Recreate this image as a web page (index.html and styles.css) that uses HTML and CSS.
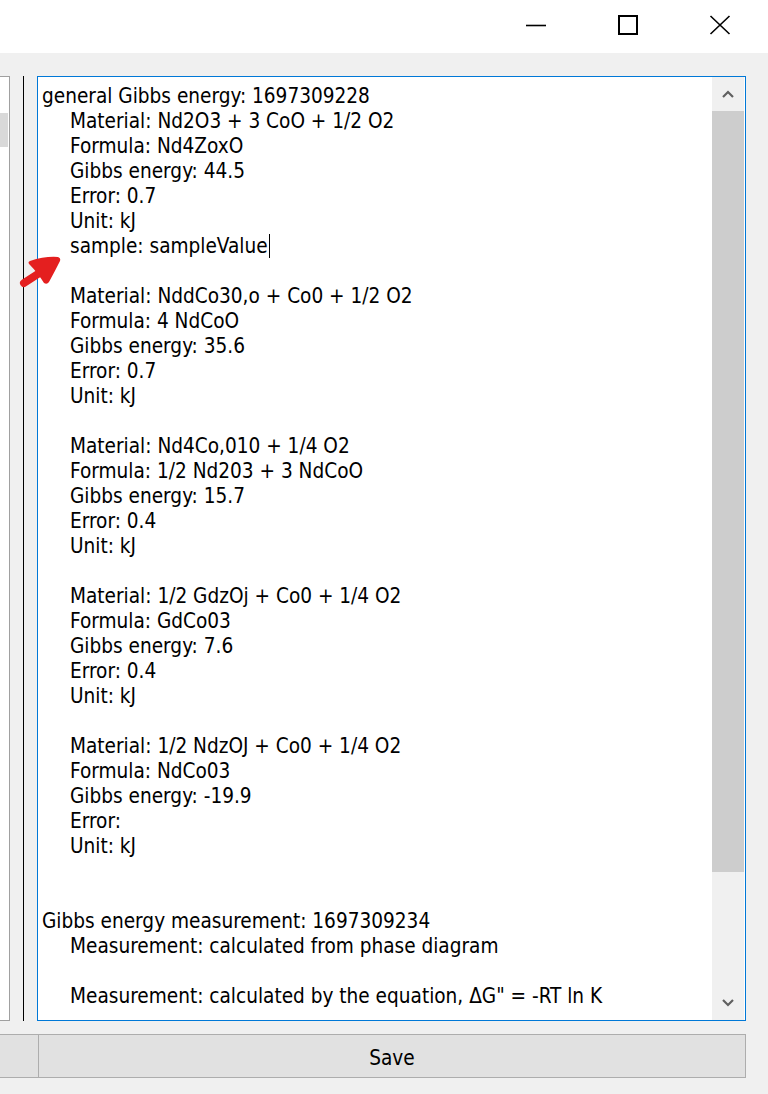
FILE: index.html
```html
<!DOCTYPE html>
<html>
<head>
<meta charset="utf-8">
<link rel="stylesheet" href="styles.css">
</head>
<body>
<div class="window">
  <div class="titlebar">
    <div class="capbtn">
      <svg width="22" height="22" viewBox="0 0 22 22"><line x1="1" y1="11.5" x2="21" y2="11.5" stroke="#000" stroke-width="1.6"/></svg>
    </div>
    <div class="capbtn">
      <svg width="22" height="22" viewBox="0 0 22 22"><rect x="2" y="2" width="18" height="18" fill="none" stroke="#000" stroke-width="2"/></svg>
    </div>
    <div class="capbtn">
      <svg width="22" height="22" viewBox="0 0 22 22"><path d="M1.5 2 L20.5 20 M20.5 2 L1.5 20" stroke="#000" stroke-width="1.6" fill="none"/></svg>
    </div>
  </div>

  <div class="main">
    <div class="leftpanel"><div class="selrow"></div></div>
    <div class="splitter"></div>
    <div class="editor">
      <div class="text">
        <div class="ln">general Gibbs energy: 1697309228</div>
        <div class="ln in">Material: Nd2O3 + 3 CoO + 1/2 O2</div>
        <div class="ln in">Formula: Nd4ZoxO</div>
        <div class="ln in">Gibbs energy: 44.5</div>
        <div class="ln in">Error: 0.7</div>
        <div class="ln in">Unit: kJ</div>
        <div class="ln in">sample: sampleValue<span class="caret"></span></div>
        <div class="ln blank"></div>
        <div class="ln in">Material: NddCo30,o + Co0 + 1/2 O2</div>
        <div class="ln in">Formula: 4 NdCoO</div>
        <div class="ln in">Gibbs energy: 35.6</div>
        <div class="ln in">Error: 0.7</div>
        <div class="ln in">Unit: kJ</div>
        <div class="ln blank"></div>
        <div class="ln in">Material: Nd4Co,010 + 1/4 O2</div>
        <div class="ln in">Formula: 1/2 Nd203 + 3 NdCoO</div>
        <div class="ln in">Gibbs energy: 15.7</div>
        <div class="ln in">Error: 0.4</div>
        <div class="ln in">Unit: kJ</div>
        <div class="ln blank"></div>
        <div class="ln in">Material: 1/2 GdzOj + Co0 + 1/4 O2</div>
        <div class="ln in">Formula: GdCo03</div>
        <div class="ln in">Gibbs energy: 7.6</div>
        <div class="ln in">Error: 0.4</div>
        <div class="ln in">Unit: kJ</div>
        <div class="ln blank"></div>
        <div class="ln in">Material: 1/2 NdzOJ + Co0 + 1/4 O2</div>
        <div class="ln in">Formula: NdCo03</div>
        <div class="ln in">Gibbs energy: -19.9</div>
        <div class="ln in">Error:</div>
        <div class="ln in">Unit: kJ</div>
        <div class="ln blank"></div>
        <div class="ln blank"></div>
        <div class="ln">Gibbs energy measurement: 1697309234</div>
        <div class="ln in">Measurement: calculated from phase diagram</div>
        <div class="ln blank"></div>
        <div class="ln in">Measurement: calculated by the equation, ΔG" = -RT ln K</div>
      </div>
      <div class="scrollbar">
        <div class="sbarrow">
          <svg width="12" height="8" viewBox="0 0 12 8"><path d="M1 7 L6 2 L11 7" stroke="#606060" stroke-width="2.2" fill="none"/></svg>
        </div>
        <div class="sbthumb"></div>
        <div class="sbspace"></div>
        <div class="sbarrow">
          <svg width="12" height="8" viewBox="0 0 12 8"><path d="M1 1 L6 6 L11 1" stroke="#606060" stroke-width="2.2" fill="none"/></svg>
        </div>
      </div>
    </div>
  </div>

  <div class="buttons">
    <div class="btn btn-left"></div>
    <div class="btn btn-save">Save</div>
  </div>

  <svg class="annot" width="44" height="36" viewBox="0 0 44 36">
    <path d="M5 31 L22 20" stroke="#e41f1f" stroke-width="8" stroke-linecap="round" fill="none"/>
    <path d="M11 9 Q26 4 39 5 Q42 6 41 9 Q36 19 30 30 Q28 33 25 31 Q18 20 11 13 Q8 10 11 9 Z" fill="#e41f1f"/>
  </svg>
</div>
</body>
</html>
```
FILE: styles.css
```css
html, body {
  margin: 0;
  padding: 0;
}
body {
  background: #f0f0f0;
  font-family: "DejaVu Sans Condensed", "DejaVu Sans", sans-serif;
  color: #000;
}
.window {
  position: relative;
  width: 768px;
  height: 1094px;
  overflow: hidden;
}
.titlebar {
  height: 53px;
  background: #fff;
  display: flex;
  justify-content: flex-end;
  padding-right: 2px;
}
.capbtn {
  width: 92px;
  height: 50px;
  display: flex;
  align-items: center;
  justify-content: center;
}
.main {
  display: flex;
  margin-top: 23px;
  height: 945px;
}
.leftpanel {
  width: 9px;
  background: #fff;
  border: 1px solid #a0a0a0;
  border-left: none;
}
.selrow {
  margin-top: 36px;
  height: 34px;
  width: 8px;
  background: #d9d9d9;
}
.splitter {
  width: 1px;
  margin-left: 13px;
  background: #000;
}
.editor {
  margin-left: 13px;
  width: 707px;
  border: 1px solid #0078d7;
  background: #fff;
  display: flex;
}
.text {
  flex: 1;
  padding: 7px 0 0 4px;
  font-size: 20.6px;
  line-height: 25px;
  overflow: hidden;
}
.ln {
  height: 25px;
  white-space: pre;
}
.ln.in {
  padding-left: 28px;
}
.caret {
  display: inline-block;
  width: 1px;
  height: 24px;
  background: #000;
  vertical-align: -5px;
  margin-left: 1px;
}
.scrollbar {
  width: 32px;
  margin-right: 1px;
  background: #f0f0f0;
  display: flex;
  flex-direction: column;
}
.sbarrow {
  height: 34px;
  display: flex;
  align-items: center;
  justify-content: center;
}
.sbthumb {
  height: 761px;
  background: #cdcdcd;
}
.sbspace {
  flex: 1;
}
.buttons {
  display: flex;
  margin-top: 13px;
  height: 44px;
}
.btn {
  box-sizing: border-box;
  height: 44px;
  background: #e1e1e1;
  border: 1px solid #adadad;
  font-size: 20.6px;
  display: flex;
  align-items: center;
  justify-content: center;
  padding-top: 3px;
}
.btn-left {
  width: 39px;
  border-left: none;
}
.btn-save {
  width: 707px;
  border-left: none;
}
.annot {
  position: absolute;
  left: 19px;
  top: 252px;
}
```
